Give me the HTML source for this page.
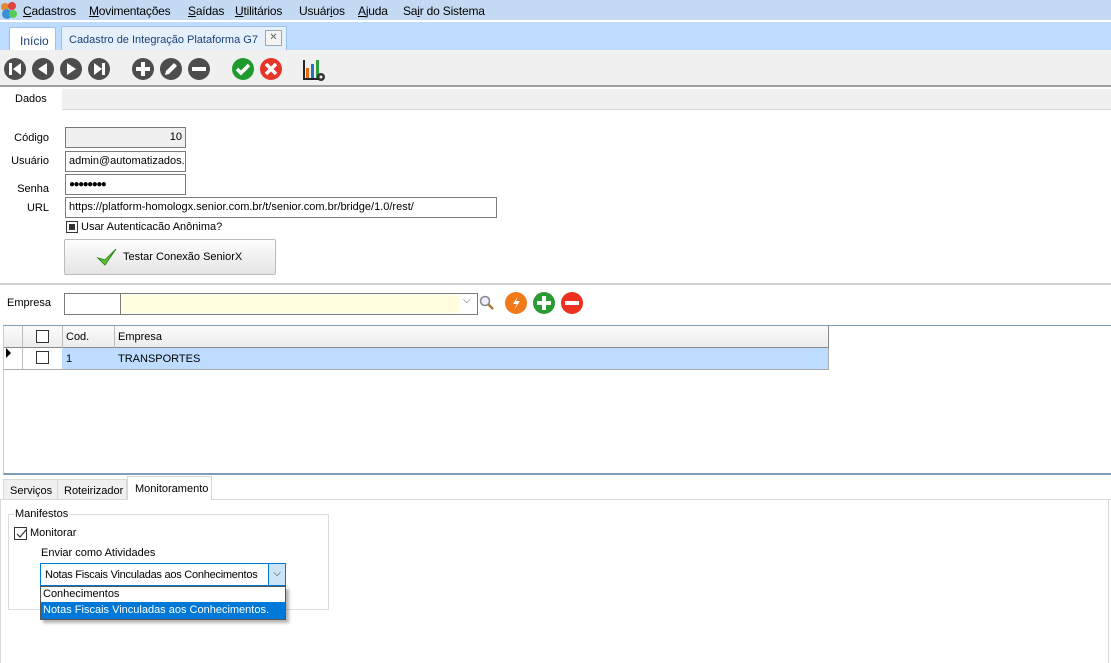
<!DOCTYPE html>
<html><head><meta charset="utf-8">
<style>
*{box-sizing:border-box;margin:0;padding:0}
body{width:1111px;height:663px;position:relative;overflow:hidden;background:#fff;font-family:"Liberation Sans",Arial,sans-serif;font-size:11px;color:#000}
.a{position:absolute}
.menu{left:0;top:0;width:1111px;height:21px;background:#c4daf2;border-bottom:1px solid #fff}
.menu span{position:absolute;top:4px;font-size:12px;letter-spacing:-0.2px}
.tabs{left:0;top:22px;width:1111px;height:28px;background:#bedcff}
.tb{left:0;top:50px;width:1111px;height:37px;background:#f0f0f0;border-bottom:2px solid #a0a0a0}
.inp{position:absolute;background:#fff;border:1px solid #7a7a7a;height:21px;padding:3px 0 0 3px;font-size:11px;white-space:nowrap;overflow:hidden}
.lbl{position:absolute;font-size:11px;text-align:right}
u{text-decoration:underline}
</style></head><body>
<div class="a menu">
 <svg class="a" style="left:0;top:1px" width="18" height="19"><circle cx="5" cy="6" r="4" fill="#e08a2c"/><circle cx="12" cy="5" r="4" fill="#d44"/><circle cx="7" cy="13" r="5" fill="#3a8fd8"/><circle cx="13" cy="13" r="4" fill="#5c5"/></svg>
 <span style="left:23px"><u>C</u>adastros</span>
 <span style="left:89px"><u>M</u>ovimentações</span>
 <span style="left:188px"><u>S</u>aídas</span>
 <span style="left:235px"><u>U</u>tilitários</span>
 <span style="left:299px">Usuár<u>i</u>os</span>
 <span style="left:358px"><u>A</u>juda</span>
 <span style="left:403px">Sa<u>i</u>r do Sistema</span>
</div>
<div class="a tabs">
 <div class="a" style="left:9px;top:5px;width:47px;height:23px;background:#fff;border:1px solid #9cc0e8;border-bottom:none;border-radius:2px 2px 0 0;padding:6px 0 0 10px;font-size:12px;color:#1a3f7a">Início</div>
 <div class="a" style="left:61px;top:4px;width:226px;height:24px;background:#e6f0fb;border:1px solid #9cc0e8;border-bottom:none;border-radius:2px 2px 0 0;padding:7px 0 0 7px;font-size:11px;color:#1a3f7a;white-space:nowrap">Cadastro de Integração Plataforma G7</div>
 <div class="a" style="left:265px;top:8px;width:17px;height:16px;border:1px solid #9aa;background:#f4f4f4;font-size:10px;text-align:center;line-height:14px;color:#666">✕</div>
</div>
<div class="a tb">
<svg class="a" style="left:0;top:0" width="340" height="37">
 <g fill="#4d4d4d">
  <circle cx="15" cy="19" r="11"/><circle cx="43" cy="19" r="11"/><circle cx="71" cy="19" r="11"/><circle cx="99" cy="19" r="11"/>
  <circle cx="143" cy="19" r="11"/><circle cx="171" cy="19" r="11"/><circle cx="199" cy="19" r="11"/>
 </g>
 <g fill="#fff">
  <rect x="9" y="13" width="3" height="12"/><path d="M21 13v12l-8-6z"/>
  <path d="M47 13v12l-9-6z"/>
  <path d="M67 13v12l9-6z"/>
  <path d="M94 13v12l8-6z"/><rect x="102" y="13" width="3" height="12"/>
  <rect x="136" y="17" width="14" height="4"/><rect x="141" y="12" width="4" height="14"/>
  <path d="M165 25l1-4 8-8 3 3-8 8z"/>
  <rect x="192" y="17" width="14" height="4"/>
 </g>
 <circle cx="243" cy="19" r="11" fill="#1e9a2e"/><path d="M237 19l4 4 8-8" stroke="#fff" stroke-width="3.5" fill="none"/>
 <circle cx="271" cy="19" r="11" fill="#e8352a"/><path d="M266 14l10 10M276 14l-10 10" stroke="#fff" stroke-width="3.5"/>
 <rect x="303" y="10" width="2" height="20" fill="#222"/><rect x="303" y="28" width="20" height="2" fill="#222"/>
 <rect x="306" y="18" width="3" height="10" fill="#e46c0a"/><rect x="311" y="14" width="3" height="14" fill="#2a6fd0"/><rect x="316" y="10" width="3" height="18" fill="#2e9e3a"/>
 <circle cx="321" cy="27" r="4" fill="#333"/><circle cx="321" cy="27" r="1.5" fill="#f0f0f0"/>
</svg>
</div>
<div class="a" style="left:0;top:89px;width:1111px;height:21px;background:#f0f0f0;border-bottom:1px solid #d8d8d8"></div>
<div class="a" style="left:0;top:89px;width:62px;height:22px;background:#fff;padding:4px 0 0 15px">Dados</div>

<div class="lbl" style="left:0;width:49px;top:132px">Código</div>
<div class="lbl" style="left:0;width:49px;top:155px">Usuário</div>
<div class="lbl" style="left:0;width:49px;top:183px">Senha</div>
<div class="lbl" style="left:0;width:49px;top:202px">URL</div>
<div class="inp" style="left:65px;top:127px;width:121px;background:#f0f0f0;text-align:right;padding-right:3px">10</div>
<div class="inp" style="left:65px;top:151px;width:121px">admin@automatizados.c</div>
<div class="inp" style="left:65px;top:174px;width:121px;font-size:10px;padding-top:4px;letter-spacing:-1.5px">●●●●●●●●</div>
<div class="inp" style="left:65px;top:197px;width:432px">https://platform-homologx.senior.com.br/t/senior.com.br/bridge/1.0/rest/</div>
<div class="a" style="left:66px;top:221px;width:12px;height:12px;border:1px solid #333;background:#fff"><div style="margin:2px;width:6px;height:6px;background:#333"></div></div>
<div class="a" style="left:81px;top:221px">Usar Autenticacão Anônima?</div>
<div class="a" style="left:64px;top:239px;width:212px;height:36px;border:1px solid #bbb;border-radius:2px;background:linear-gradient(#fdfdfd,#e4e4e4);padding:11px 0 0 58px;font-size:11px">Testar Conexão SeniorX</div>
<svg class="a" style="left:96px;top:247px" width="22" height="20"><path d="M2 11l7 7L20 2 9 13z" fill="#5fc52e" stroke="#2e8a1a" stroke-width="1"/></svg>

<div class="a" style="left:0;top:283px;width:1111px;height:2px;background:#d0d0d0"></div>
<div class="a" style="left:7px;top:297px">Empresa</div>
<div class="inp" style="left:64px;top:293px;width:57px;height:22px"></div>
<div class="inp" style="left:120px;top:293px;width:358px;height:22px;background:#fff;padding:1px"><div style="width:337px;height:18px;background:#ffffe0"></div></div>
<div class="a" style="left:463px;top:295px;font-size:10px;color:#555">⌵</div>
<svg class="a" style="left:478px;top:294px" width="18" height="18"><circle cx="7" cy="7" r="4.5" fill="#eef" stroke="#888" stroke-width="1.5"/><path d="M10 10l5 5" stroke="#a57a3a" stroke-width="2.5"/></svg>
<svg class="a" style="left:504px;top:291px" width="82" height="24">
 <circle cx="12" cy="12" r="11" fill="#f07a1a"/><path d="M14 5l-5 8h4l-3 6 6-9h-4z" fill="#fff"/>
 <circle cx="40" cy="12" r="11" fill="#2a9a32"/><rect x="33" y="10" width="14" height="4" fill="#fff"/><rect x="38" y="5" width="4" height="14" fill="#fff"/>
 <circle cx="68" cy="12" r="11" fill="#ee3020"/><rect x="61" y="10" width="14" height="4" fill="#fff"/>
</svg>

<div class="a" style="left:3px;top:325px;width:1108px;height:150px;border-top:1px solid #7f9db9;border-bottom:2px solid #7f9db9;border-left:1px solid #ccc"></div>
<div class="a" style="left:4px;top:326px;width:825px;height:22px;background:linear-gradient(#fbfbfb,#ececec);border-bottom:1px solid #888;border-right:1px solid #888"></div>
<div class="a" style="left:22px;top:326px;width:1px;height:44px;background:#bbb"></div>
<div class="a" style="left:62px;top:326px;width:1px;height:44px;background:#bbb"></div>
<div class="a" style="left:114px;top:326px;width:1px;height:44px;background:#bbb"></div>
<div class="a" style="left:36px;top:330px;width:13px;height:13px;border:1px solid #333;background:#fff"></div>
<div class="a" style="left:66px;top:331px">Cod.</div>
<div class="a" style="left:118px;top:331px">Empresa</div>
<div class="a" style="left:62px;top:348px;width:767px;height:22px;background:#bedcff;border-right:1px solid #aaa;border-bottom:1px solid #aaa"></div>
<div class="a" style="left:4px;top:348px;width:58px;height:22px;border-bottom:1px solid #aaa"></div>
<div class="a" style="left:6px;top:348px;width:0;height:0;border-top:5px solid transparent;border-bottom:5px solid transparent;border-left:5px solid #000"></div>
<div class="a" style="left:36px;top:351px;width:13px;height:13px;border:1px solid #333;background:#fff"></div>
<div class="a" style="left:66px;top:353px">1</div>
<div class="a" style="left:118px;top:353px">TRANSPORTES</div>

<div class="a" style="left:0;top:499px;width:1111px;height:1px;background:#d8d8d8"></div>
<div class="a" style="left:3px;top:479px;width:55px;height:21px;background:#f0f0f0;border:1px solid #d8d8d8;padding:5px 0 0 6px">Serviços</div>
<div class="a" style="left:57px;top:479px;width:70px;height:21px;background:#f0f0f0;border:1px solid #d8d8d8;padding:5px 0 0 6px">Roteirizador</div>
<div class="a" style="left:127px;top:476px;width:85px;height:24px;background:#fff;border:1px solid #d8d8d8;border-bottom:none;padding:6px 0 0 7px">Monitoramento</div>
<div class="a" style="left:1108px;top:499px;width:1px;height:164px;background:#d8d8d8"></div>
<div class="a" style="left:0;top:499px;width:1px;height:164px;background:#d8d8d8"></div>

<div class="a" style="left:8px;top:514px;width:321px;height:96px;border:1px solid #dcdcdc"></div>
<div class="a" style="left:14px;top:508px;background:#fff;padding:0 1px">Manifestos</div>
<div class="a" style="left:14px;top:527px;width:13px;height:13px;border:1px solid #333;background:#fff"></div>
<svg class="a" style="left:15px;top:528px" width="12" height="12"><path d="M2 6l3 3 6-7" stroke="#333" stroke-width="1.2" fill="none"/></svg>
<div class="a" style="left:30px;top:527px">Monitorar</div>
<div class="a" style="left:41px;top:547px">Enviar como Atividades</div>
<div class="a" style="left:40px;top:563px;width:246px;height:23px;border:1px solid #0078d7;background:#fff;padding:5px 0 0 4px;letter-spacing:-0.25px;white-space:nowrap;overflow:hidden">Notas Fiscais Vinculadas aos Conhecimentos</div>
<div class="a" style="left:268px;top:564px;width:17px;height:21px;background:#cce4f7;border-left:1px solid #0078d7;text-align:center;font-size:10px;padding-top:4px;color:#333">⌵</div>
<div class="a" style="left:40px;top:586px;width:246px;height:34px;border:1px solid #555;background:#fff;box-shadow:3px 3px 3px rgba(0,0,0,.3)"></div>
<div class="a" style="left:43px;top:588px">Conhecimentos</div>
<div class="a" style="left:41px;top:602px;width:244px;height:17px;background:#0078d7;color:#fff;padding:2px 0 0 2px;white-space:nowrap">Notas Fiscais Vinculadas aos Conhecimentos.</div>
</body></html>
